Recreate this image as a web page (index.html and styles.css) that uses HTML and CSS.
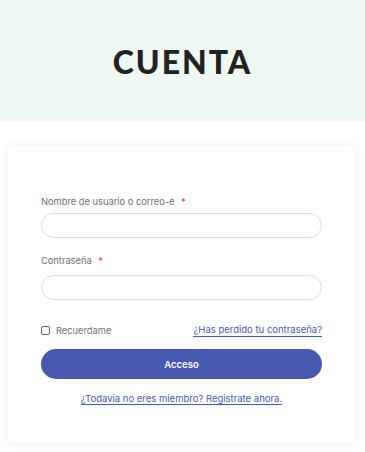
FILE: index.html
```html
<!DOCTYPE html>
<html lang="es">
<head>
<meta charset="utf-8">
<link rel="stylesheet" href="styles.css">
</head>
<body>
<header class="hero"><h1 class="title">CUENTA</h1></header>
<main class="wrap">
  <form class="card">
    <label class="label">Nombre de usuario o correo-e <span class="req">*</span></label>
    <input class="field" type="text">
    <label class="label second">Contraseña <span class="req">*</span></label>
    <input class="field" type="password">
    <div class="row">
      <label class="remember"><span class="box"></span>Recuerdame</label>
      <a class="link" href="#">¿Has perdido tu contraseña?</a>
    </div>
    <button class="btn" type="button">Acceso</button>
    <div class="bottom"><a class="link" href="#">¿Todavia no eres miembro? Registrate ahora.</a></div>
  </form>
</main>
</body>
</html>
```
FILE: styles.css
```css
* { box-sizing: border-box; }
html, body { margin: 0; padding: 0; background: #fff; }
body { font-family: Inter, "Liberation Sans", sans-serif; width: 365px; height: 452px; overflow: hidden; }
.hero { background: #eef7f1; height: 121px; display: flex; align-items: center; justify-content: center; }
.title { margin: 0; font-family: "Lato", sans-serif; font-weight: 900; font-size: 32px; letter-spacing: 2px; color: #222; padding-top: 2px; }
.wrap { padding: 25px 10px 0 8px; }
.card { background: #fff; border-radius: 6px; box-shadow: 0 0 10px rgba(0,0,0,0.08); padding: 50px 33px 0 33px; display: flex; flex-direction: column; height: 297px; }
.label { display: block; font-size: 9.3px; color: #707070; line-height: 12px; height: 12px; margin-bottom: 5px; }
.label.second { margin-top: 17px; margin-bottom: 8px; }
.req { color: #e23b3b; margin-left: 4px; }
.field { flex: none; height: 25px; border: 1px solid #dcdcdc; border-radius: 13px; background: #fff; width: 281px; margin: 0; padding: 0; }
.row { flex: none; display: flex; justify-content: space-between; align-items: center; margin-top: 23px; height: 14px; }
.remember { display: flex; align-items: center; font-size: 9.3px; color: #707070; }
.box { width: 9px; height: 9px; border: 1px solid #666; border-radius: 2px; margin-right: 6px; }
.link { color: #4a5ab0; font-size: 9.5px; text-decoration: none; border-bottom: 1px solid #4a5ab0; line-height: 12px; }
.btn { flex: none; margin: 12px 0 0 0; padding: 0; height: 30px; width: 281px; border: none; border-radius: 15px; background: #4759b1; color: #fff; font-family: Inter, sans-serif; font-weight: 600; font-size: 9.5px; }
.bottom { flex: none; text-align: center; margin-top: 11px; line-height: 12px; }
```
